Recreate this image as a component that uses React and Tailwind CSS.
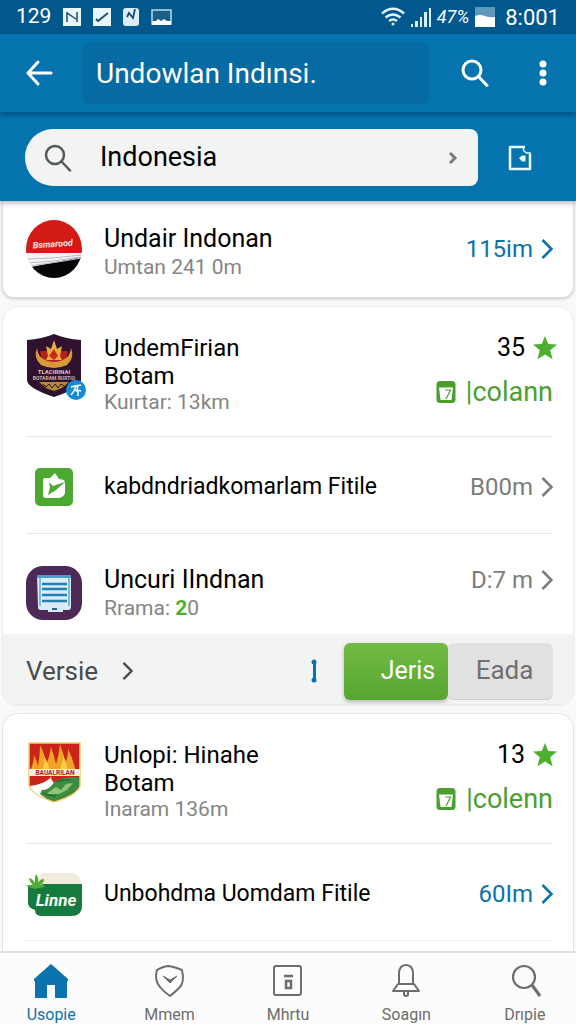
import React from "react";

const fontStack = "font-['Roboto','Liberation_Sans',sans-serif]";

const SearchIcon = ({ className, strokeWidth = 2 }) => (
  <svg
    className={className}
    viewBox="0 0 28 28"
    fill="none"
    stroke="currentColor"
    strokeWidth={strokeWidth}
    strokeLinecap="round"
    aria-hidden="true"
  >
    <circle cx="11" cy="11" r="9" />
    <path d="M17.5 17.5 26 26.5" />
  </svg>
);

const Chevron = ({ className }) => (
  <svg
    className={className}
    viewBox="0 0 12 20"
    fill="none"
    stroke="currentColor"
    strokeWidth="2.6"
    aria-hidden="true"
  >
    <path d="m1.5 1 9 9-9 9" />
  </svg>
);

const Star = () => (
  <svg className="h-6 w-6" viewBox="0 0 24 24" fill="#4caf2e" aria-hidden="true">
    <path d="m12 0 3.200 8 8.800.500-6.800 5.700 2.400 9-7.600-4.700L4.400 23.200l2.400-9L0 8.500 8.800 8z" />
  </svg>
);

const TagIcon = () => (
  <svg className="h-[22px] w-5" viewBox="0 0 20 22" aria-hidden="true">
    <rect x="0.500" width="19" height="22" rx="3.500" fill="#4a9f2f" />
    <path d="M3 6.500h14L15.500 19H4.500z" fill="#fff" />
    <path d="M9 9h5.500L10 18" fill="none" stroke="#4a9f2f" strokeWidth="1.200" />
  </svg>
);

/* Logos */

const FlagLogo = () => (
  <svg className="h-[58px] w-14" viewBox="0 0 56 58" aria-hidden="true">
    <defs>
      <clipPath id="flag-clip">
        <ellipse cx="28" cy="29" rx="28" ry="29" />
      </clipPath>
    </defs>
    <g clipPath="url(#flag-clip)">
      <rect width="56" height="58" fill="#f4f4f6" />
      <rect width="56" height="33" fill="#d31a16" />
      <path d="M0 48 56 37v21H0z" fill="#050505" />
      <path d="M0 39q26 0 56-4M0 43q26-1 56-6M2 46q26-3 54-8" stroke="#b9bcc6" fill="none" />
      <text x="27" y="27" textAnchor="middle" fontSize="9" fontStyle="italic" fontWeight="700" fill="#fbe4e2" transform="rotate(-4 27 27)">
        Bsmarood
      </text>
    </g>
  </svg>
);

const CrestLogo = () => (
  <svg className="h-16 w-14" viewBox="0 0 56 64" aria-hidden="true">
    <path d="M1 6Q16 5 28 0q12 5 27 6v40q0 8-27 17Q1 54 1 46z" fill="#2f1130" />
    <path d="M14 17h28l-3 15H17z" fill="#b3231a" />
    <path d="M11 14q1 9 8 12 9 4 18 0 7-3 8-12 4 10-4 17-13 6-26 0-8-7-4-17z" fill="#d79a3a" />
    <path d="m28 6 3 9 5-3-2 10 2 4H20l2-4-2-10 5 3z" fill="#eda93c" />
    <path d="m28 15 4 7-4 4-5-4z" fill="#c62a1c" />
    <text x="28" y="40" textAnchor="middle" fontSize="6" fontWeight="700" fill="#e0c4b8">
      TLACIRINAI
    </text>
    <text x="28" y="46" textAnchor="middle" fontSize="5" fontWeight="700" fill="#cfae9f">
      BOTARAM RURTIO
    </text>
    <path d="M13 48h30l-7 6-8 3-8-3z" fill="#b78a35" />
    <path d="m17 50 3 3 3-3 3 4 3-4 3 4 3-4 3 2" stroke="#2f1130" fill="none" />
  </svg>
);

const ShareLogo = () => (
  <svg className="h-[38px] w-[38px]" viewBox="0 0 38 38" aria-hidden="true">
    <rect width="38" height="38" rx="5" fill="#4ba831" />
    <path d="M8 12q0-2 2-2h5l5-5 4 6 5 1 1 3v10q-1 4-6 5H11q-3 0-3-3z" fill="#fff" />
    <path d="m14 14 4 4 12-4-9 8-8 5 2-8z" fill="#4ba831" />
  </svg>
);

const DocLogo = () => (
  <svg className="h-[54px] w-14" viewBox="0 0 56 54" aria-hidden="true">
    <rect width="56" height="54" rx="17" fill="#4d2957" />
    <path d="M11 9h34v32q0 3-3 3h-5v2H22v-2h-7q-3 0-3-3z" fill="#d9ecf7" />
    <path d="M11 9h34v3H11z" fill="#4e9dc6" />
    <path d="M13 12h2v28h-2zm29 0h2v28h-2z" fill="#7fbad8" />
    <path d="M16 18h25M16 23h25M16 29h25M16 35h25" stroke="#267fae" strokeWidth="2.500" />
    <path d="M26 42h5v2h-5z" fill="#2d6290" />
  </svg>
);

const FlameLogo = () => (
  <svg className="h-[62px] w-14" viewBox="0 0 56 62" aria-hidden="true">
    <path d="M3 2h51v43q-3 9-26 16Q5 53 3 44z" fill="#c9241a" stroke="#e5d36b" strokeWidth="1.500" />
    <path d="M5 28q3-8 3-14 3 6 4 11 2-10 2-21 5 9 6 20 4-9 5-18 3 8 5 17 3-9 4-20 4 10 5 20 3-6 3-15 5 10 7 20z" fill="#f0a326" />
    <path d="M17 28q2-8 1-13 4 7 5 13zm17 0q3-7 3-14 4 8 4 14z" fill="#f7cd48" />
    <path d="M3 28h51v7H3z" fill="#f7ebe2" />
    <text x="29" y="34" textAnchor="middle" fontSize="6.500" fontWeight="700" fill="#a3271e">
      BAUALRILAN
    </text>
    <path d="M4 45q14-3 24-9H4z" fill="#c9241a" />
    <path d="M4 45q12-1 22-9h-2l9 14-14 7Q6 52 4 45z" fill="#fff" />
    <path d="M16 49q6 0 10-5 6-9 27-8v9q-4 9-25 15-8-2-14-7z" fill="#3d8c40" />
    <path d="m20 53 10-7 5 3 5-6 7-1-6 7-8 4z" fill="#8fc477" />
    <path d="M31 41q6-3 13-2M18 52q5 3 12 3" stroke="#256b31" fill="none" strokeWidth="1.500" />
  </svg>
);

const LeafLogo = () => (
  <svg className="h-[46px] w-14" viewBox="0 0 56 46" aria-hidden="true">
    <path d="M12 6q2-4 8-4h24q10 0 11 11H12z" fill="#f1ebdd" />
    <path d="M2 15h10l5-2h39v22q0 10-11 10H16q-7 0-7-6-7-2-7-7z" fill="#157a3d" />
    <path d="M9 18Q3 16 0 15q4-2 7-1-4-4-4-7 4 1 6 5-1-5 1-9 3 4 2 9 2-4 6-4 0 4-4 6 4-1 5 2-6 1-11 2z" fill="#4cab37" />
    <text x="30" y="35" textAnchor="middle" fontSize="17" fontStyle="italic" fontWeight="700" fill="#f3fff5">
      Linne
    </text>
  </svg>
);

const StatusBar = () => (
  <div className="flex h-[34px] items-center justify-between bg-[#01588c] px-4 text-white">
    <div className="flex items-center gap-3">
      <span className="text-[21px]">129</span>
      <svg className="h-[18px] w-[18px]" viewBox="0 0 18 18" aria-hidden="true">
        <rect width="18" height="18" fill="#e6f6fb" />
        <path d="M4 14V5l9 6m1-7v10" fill="none" stroke="#174d6d" strokeWidth="1.500" />
      </svg>
      <svg className="h-[18px] w-[18px]" viewBox="0 0 18 18" aria-hidden="true">
        <rect width="18" height="18" fill="#e6f6fb" />
        <path d="m3 11 2 2L15 5" fill="none" stroke="#174d6d" strokeWidth="1.800" />
      </svg>
      <svg className="h-[18px] w-4" viewBox="0 0 16 18" aria-hidden="true">
        <rect width="16" height="18" rx="3" fill="#d9eef7" />
        <path d="m4 9 2-4 4 5 2-9" fill="none" stroke="#174d6d" strokeWidth="1.800" />
      </svg>
      <svg className="h-4 w-[21px]" viewBox="0 0 21 16" aria-hidden="true">
        <rect x="1" y="1" width="19" height="14" fill="#1b5f86" stroke="#b9dcec" strokeWidth="1.500" />
        <path d="M1 12h4l2-2 3 2 3-2 3 2h4v4H1z" fill="#fff" />
      </svg>
    </div>
    <div className="flex items-center gap-1.5">
      <svg className="h-5 w-6" viewBox="0 0 24 20" fill="none" stroke="#e6f6fb" strokeWidth="2.500" aria-hidden="true">
        <path d="M1 6.500Q12-3 23 6.500M4.500 10.500q7.500-6 15 0M8 14q4-3 8 0" />
        <circle cx="12" cy="17" r="1.500" fill="#e6f6fb" stroke="none" />
      </svg>
      <svg className="h-5 w-5" viewBox="0 0 20 20" fill="#d9eef7" aria-hidden="true">
        <path d="M0 17h2v3H0zm4-3h3v6H4zm5-4h2v10H9zm4-5h3v15h-3zm5-4h2v19h-2z" />
      </svg>
      <span className="text-lg italic">47%</span>
      <svg className="h-5 w-5" viewBox="0 0 20 20" aria-hidden="true">
        <rect width="20" height="20" fill="#5c99bd" />
        <path d="M0 9q5-2 10 0t10 1v10H0z" fill="#fff" />
      </svg>
      <span className="pl-1 text-[22px]">8:001</span>
    </div>
  </div>
);

const AppBar = () => (
  <div className="relative z-10 flex h-[78px] items-center bg-[#0573ae] pl-[25px] pr-[15px] shadow-[0_3px_5px_rgba(0,40,80,0.45)]">
    <button type="button" aria-label="Back" className="shrink-0">
      <svg className="h-7 w-7" viewBox="0 0 28 28" fill="none" stroke="#fff" strokeWidth="3" strokeLinecap="round" strokeLinejoin="round" aria-hidden="true">
        <path d="M13 3 3 14l10 11M3 14h23" />
      </svg>
    </button>
    <div className="ml-[29px] flex h-[62px] flex-1 items-center rounded-lg bg-[#066ba2] px-3.5 pt-0.5">
      <h1 className="whitespace-nowrap text-[28px] text-white">Undowlan Indınsi.</h1>
    </div>
    <button type="button" aria-label="Search" className="ml-8 text-white">
      <SearchIcon className="h-7 w-7" strokeWidth={3} />
    </button>
    <button type="button" aria-label="More options" className="ml-9 flex w-9 justify-center">
      <svg className="h-[26px] w-2" viewBox="0 0 8 26" fill="#fff" aria-hidden="true">
        <circle cx="4" cy="4" r="3.500" />
        <circle cx="4" cy="13" r="3.500" />
        <circle cx="4" cy="22" r="3.500" />
      </svg>
    </button>
  </div>
);

const SearchBar = () => (
  <div className="flex h-[89px] items-center bg-[#0573ae] pl-[25px] pr-[42px] pt-0.5">
    <label className="flex h-[57px] min-w-0 flex-1 items-center rounded-l-[28px] rounded-r-lg bg-[#f2f3f3] pl-[19px] pr-5">
      <SearchIcon className="h-7 w-7 shrink-0 text-[#55585b]" strokeWidth={2.5} />
      <input
        type="text"
        aria-label="Search place"
        defaultValue="Indonesia"
        className="ml-7 min-w-0 flex-1 bg-transparent text-[27px] text-black outline-none"
      />
      <svg className="h-3 w-2.5" viewBox="0 0 10 12" fill="none" stroke="#7d7d7d" strokeWidth="3" aria-hidden="true">
        <path d="m2 1 5 5-5 5" />
      </svg>
    </label>
    <button type="button" aria-label="Saved places" className="ml-7">
      <svg className="h-7 w-7" viewBox="0 0 28 28" fill="none" stroke="#e9fbff" strokeWidth="2.500" strokeLinejoin="round" aria-hidden="true">
        <path d="M19 3H4v22h20V10" />
        <path d="M17.500 3v3.500l3 2.500H25" strokeWidth="1.500" />
        <path d="m13 14 3-2.500h3.500v6H16z" fill="#e9fbff" stroke="none" />
      </svg>
    </button>
  </div>
);

const Distance = ({ children, active }) => (
  <a
    href="#detail"
    className={`flex shrink-0 items-center gap-2 text-2xl leading-7 ${
      active ? "text-[#0a72a8]" : "text-[#7c7c7c]"
    }`}
  >
    {children}
    <Chevron className="h-5 w-3" />
  </a>
);

const Row = ({ logo, children, side, className = "" }) => (
  <div className={`flex gap-[22px] ${className}`}>
    <div className="flex w-14 shrink-0 justify-center">{logo}</div>
    <div className="min-w-0 flex-1 whitespace-nowrap">{children}</div>
    {side}
  </div>
);

const Title = ({ children, size = "text-[25px]" }) => (
  <h2 className={`leading-7 text-black ${size}`}>{children}</h2>
);

const Sub = ({ children }) => (
  <p className="text-[21px] leading-7 text-[#858585]">{children}</p>
);

const Rating = ({ score, label }) => (
  <div className="flex shrink-0 flex-col items-end gap-4">
    <div className="-mr-1 flex items-center gap-2 text-[25px] leading-7 text-black">
      {score}
      <Star />
    </div>
    <div className="flex items-center gap-2.5 text-[27px] leading-7 text-[#4a9f2f]">
      <TagIcon />
      {label}
    </div>
  </div>
);

const Place = ({ logo, name, area, distance, score, label }) => (
  <Row
    logo={logo}
    side={<Rating score={score} label={label} />}
    className="h-[130px] border-b border-[#e6e7e8] pt-[27px]"
  >
    <Title size="text-2xl">{name}</Title>
    <Title size="text-2xl">{area}</Title>
    <div className="-mt-0.5">
      <Sub>{distance}</Sub>
    </div>
  </Row>
);

const tabs = [
  {
    label: "Usopie",
    active: true,
    icon: (
      <svg className="h-9 w-9" viewBox="0 0 36 36" fill="#0a72ad">
        <path d="M18 1 1 16v2h1v17h12V22h8v13h12V18h1v-2z" />
      </svg>
    ),
  },
  {
    label: "Mmem",
    icon: (
      <svg className="h-9 w-9" viewBox="0 0 36 36" fill="none" stroke="currentColor" strokeWidth="2" strokeLinejoin="round">
        <path d="M17 3q6 1 13 4 3 13-3 18-4 4-9 8-6-4-10-9-6-7-3-17 7-4 12-4z" />
        <path d="m11 13 7 4 7-4-7 7z" fill="currentColor" strokeWidth="1" />
      </svg>
    ),
  },
  {
    label: "Mhrtu",
    icon: (
      <svg className="h-9 w-9" viewBox="0 0 36 36" fill="none" stroke="currentColor" strokeWidth="2">
        <rect x="4" y="3" width="27" height="29" rx="2" />
        <path d="M14 13h9M16 18h5v7h-5z" strokeWidth="2.500" />
      </svg>
    ),
  },
  {
    label: "Soagın",
    icon: (
      <svg className="h-9 w-9" viewBox="0 0 36 36" fill="none" stroke="currentColor" strokeWidth="2" strokeLinejoin="round">
        <path d="M11 21V11q0-9 7-9t7 9v10" />
        <path d="M10 21h16l5 7H5z" />
        <path d="M16 29v3q2 2 4 0v-3" />
      </svg>
    ),
  },
  {
    label: "Drıpie",
    icon: (
      <svg className="h-9 w-9" viewBox="0 0 36 36" fill="none" stroke="currentColor" strokeWidth="2.200">
        <circle cx="17" cy="14" r="11" />
        <path d="m25 22 8 11" strokeWidth="3" />
      </svg>
    ),
  },
];

const App = () => {
  return (
    <div className={`flex h-screen flex-col overflow-hidden bg-[#f8f9f9] ${fontStack}`}>
      <header className="relative z-10 shrink-0 shadow-[0_2px_5px_rgba(0,0,0,0.3)]">
        <StatusBar />
        <AppBar />
        <SearchBar />
      </header>

      <main className="flex min-h-0 flex-1 flex-col gap-2 overflow-y-auto px-0.5 [scrollbar-width:none]">
        <section className="shrink-0 rounded-b-xl border border-t-0 border-[#dcdfe2] bg-white pl-[23px] pr-5 shadow-[0_1px_3px_rgba(0,0,0,0.2)]">
          <Row
            logo={<FlagLogo />}
            side={<Distance active>115im</Distance>}
            className="h-24 items-center"
          >
            <div className="pt-2">
              <Title>Undair Indonan</Title>
              <Sub>Umtan 241 0m</Sub>
            </div>
          </Row>
        </section>

        <section className="shrink-0 overflow-hidden rounded-2xl border border-[#e9ebec] bg-white shadow-xs">
          <div className="pl-[23px] pr-5">
            <Place
              logo={
                <div className="relative h-[66px]">
                  <CrestLogo />
                  <span className="absolute -right-1 bottom-0 flex h-5 w-5 items-center justify-center rounded-full bg-[#158bd3]">
                    <svg className="h-3.5 w-3.5" viewBox="0 0 14 14" fill="none" stroke="#fff" strokeWidth="1.500" aria-hidden="true">
                      <path d="m2 4 4-1 6-1M7 3 5 8l-3 4M6 7l3 2v4M9 3l-1 4 4 1" />
                    </svg>
                  </span>
                </div>
              }
              name="UndemFirian"
              area="Botam"
              distance="Kuırtar: 13km"
              score="35"
              label="|colann"
            />
            <Row
              logo={<ShareLogo />}
              side={<Distance>B00m</Distance>}
              className="h-[97px] items-center border-b border-[#e6e7e8] pt-1"
            >
              <Title size="text-[23px]">kabdndriadkomarlam Fitile</Title>
            </Row>
            <Row
              logo={<DocLogo />}
              side={
                <div>
                  <Distance>D:7 m</Distance>
                </div>
              }
              className="h-[100px] pt-8"
            >
              <Title>Uncuri IIndnan</Title>
              <Sub>
                Rrama: <span className="font-bold text-[#4caf2e]">2</span>0
              </Sub>
            </Row>
          </div>
          <div className="flex h-[70px] items-center bg-[#f2f3f3] pl-[23px] pr-5 pt-1">
            <a href="#versie" className="flex items-center gap-6 text-[26px] text-[#4b4b4b]">
              Versie
              <Chevron className="h-[18px] w-[11px]" />
            </a>
            <svg className="ml-auto mr-6 h-6 w-3" viewBox="0 0 12 24" fill="#0a72ad" aria-hidden="true">
              <circle cx="6" cy="3" r="2.500" />
              <circle cx="6" cy="21" r="2.500" />
              <path d="M5 3h3v18H5z" />
            </svg>
            <button
              type="button"
              className="h-[57px] w-[104px] rounded-md bg-linear-to-b from-[#72bb45] to-[#56a62f] pl-6 text-[25px] text-white shadow-[0_2px_4px_rgba(0,0,0,0.25)]"
            >
              Jeris
            </button>
            <button
              type="button"
              className="h-[57px] w-[105px] rounded-md border-b border-[#cfcfcf] bg-[#e1e1e1] pl-2 text-[26px] text-[#707070]"
            >
              Eada
            </button>
          </div>
        </section>

        <section className="shrink-0 rounded-t-2xl border border-b-0 border-[#e1e4e8] bg-white pb-3 pl-[23px] pr-5">
          <Place
            logo={<FlameLogo />}
            name="Unlopi: Hinahe"
            area="Botam"
            distance="Inaram 136m"
            score="13"
            label="|colenn"
          />
          <Row
            logo={<LeafLogo />}
            side={<Distance active>60Im</Distance>}
            className="h-[97px] items-center border-b border-[#eff0f0] pt-1"
          >
            <Title size="text-[23px]">Unbohdma Uomdam Fitile</Title>
          </Row>
        </section>
      </main>

      <nav className="-mx-2 grid h-[73px] shrink-0 grid-cols-5 border-t-2 border-[#dcdfe1] bg-[#fcfcfc]">
        {tabs.map((tab) => (
          <a
            key={tab.label}
            href="#tab"
            className={`flex flex-col items-center pt-2.5 text-base ${
              tab.active ? "text-[#0a72ad]" : "text-[#6d6d6d]"
            }`}
          >
            {tab.icon}
            <span className="pt-1">{tab.label}</span>
          </a>
        ))}
      </nav>
    </div>
  );
};

export default App;
